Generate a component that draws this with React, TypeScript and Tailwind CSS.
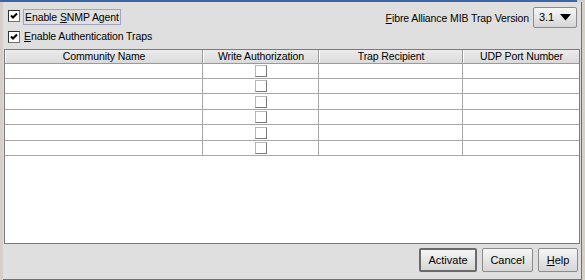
import React from 'react';

const columns = [
  { title: 'Community Name', w: 'w-[198px]' },
  { title: 'Write Authorization', w: 'w-[116px]' },
  { title: 'Trap Recipient', w: 'w-[144px]' },
  { title: 'UDP Port Number', w: 'w-[116px]' },
];

const rowHeights = ['h-[15px]', 'h-[15px]', 'h-[16px]', 'h-[15px]', 'h-[16px]', 'h-[15px]'];

const CheckBox: React.FC<{ checked?: boolean }> = ({ checked }) => (
  <div className="w-[12px] h-[12px] bg-white border border-t-[#303030] border-l-[#303030] border-r-[#707070] border-b-[#707070] flex items-center justify-center">
    {checked && (
      <svg width="8" height="8" viewBox="0 0 8 8">
        <path d="M1 3.5 L3 5.5 L7 1.5" stroke="#000" strokeWidth="2" fill="none" />
      </svg>
    )}
  </div>
);

const CellBox: React.FC = () => (
  <div className="w-[12px] h-[12px] bg-white border border-t-[#b8b8b8] border-l-[#b8b8b8] border-r-[#7a7a7a] border-b-[#7a7a7a]" />
);

const Button: React.FC<{ label: React.ReactNode; w: string; primary?: boolean }> = ({ label, w, primary }) => (
  <button
    className={`${w} h-[24px] flex items-center justify-center rounded-[2px] bg-gradient-to-b from-[#f6f6f6] to-[#d6d6d6] text-black text-[11px] tracking-normal ${
      primary ? 'border-2 border-[#6a6a6a]' : 'border border-[#8c8c8c]'
    }`}
  >
    {label}
  </button>
);

const App: React.FC = () => {
  return (
    <div className="w-[585px] h-[280px] bg-[#d4d0c8] flex flex-col overflow-hidden font-['Liberation_Sans',Arial,sans-serif] text-[10.5px] tracking-[-0.1px] text-black">
      <div className="h-[2px] bg-[#3a66a8] mr-[8px]" />
      <div className="flex flex-1">
        <div className="w-[3px] bg-[#d4d0c8]" />
        <div className="w-[579px] bg-[#dfdfdf] border-r border-b border-[#6f6f6f] flex flex-col">
          {/* options */}
          <div className="flex justify-between h-[28px] pt-[5px] pl-[5px] pr-[4px]">
            <div className="flex items-start gap-[3px] pt-[2px]">
              <div className="mt-[1px]">
                <CheckBox checked />
              </div>
              <span className="border border-[#a4a4c0] px-[1px] h-[16px] leading-[14px]">
                Enable <span className="underline">S</span>NMP Agent
              </span>
            </div>
            <div className="flex items-start gap-[4px]">
              <span className="pt-[4px]">
                <span className="underline">F</span>ibre Alliance MIB Trap Version
              </span>
              <div className="w-[44px] h-[21px] border border-[#8c8c8c] rounded-[2px] bg-gradient-to-b from-[#f6f6f6] to-[#d6d6d6] flex items-center pl-[5px] gap-[6px] text-[11px]">
                <span>3.1</span>
                <svg width="11" height="7" viewBox="0 0 11 7">
                  <path d="M0 0 H11 L5.5 6.5 Z" fill="#000" />
                </svg>
              </div>
            </div>
          </div>
          <div className="flex items-center gap-[4px] h-[14px] pl-[5px]">
            <CheckBox checked />
            <span>
              <span className="underline">E</span>nable Authentication Traps
            </span>
          </div>

          {/* table */}
          <div className="mt-[5px] ml-[1px] w-[576px] h-[195px] bg-white border border-[#7a7a7a] flex flex-col">
            <div className="flex h-[14px] bg-gradient-to-b from-[#ececec] to-[#dadada] border-b border-[#9a9a9a]">
              {columns.map((c, i) => (
                <div
                  key={c.title}
                  className={`${c.w} flex items-center justify-center leading-none border-l border-l-white ${
                    i < columns.length - 1 ? 'border-r border-r-[#9a9a9a]' : ''
                  }`}
                >
                  {c.title}
                </div>
              ))}
            </div>
            {rowHeights.map((h, r) => (
              <div key={r} className={`flex ${h} border-b border-[#a8a8a8]`}>
                {columns.map((c, i) => (
                  <div
                    key={c.title}
                    className={`${c.w} flex items-center justify-center ${
                      i < columns.length - 1 ? 'border-r border-[#a8a8a8]' : ''
                    }`}
                  >
                    {i === 1 && <CellBox />}
                  </div>
                ))}
              </div>
            ))}
          </div>

          {/* buttons */}
          <div className="flex justify-end gap-[5px] pt-[4px] pr-[3px]">
            <Button label="Activate" w="w-[58px]" primary />
            <Button label="Cancel" w="w-[51px]" />
            <Button
              label={
                <span>
                  <span className="underline">H</span>elp
                </span>
              }
              w="w-[40px]"
            />
          </div>
        </div>
        <div className="flex-1 bg-[#d4d0c8]" />
      </div>
    </div>
  );
};

export default App;
